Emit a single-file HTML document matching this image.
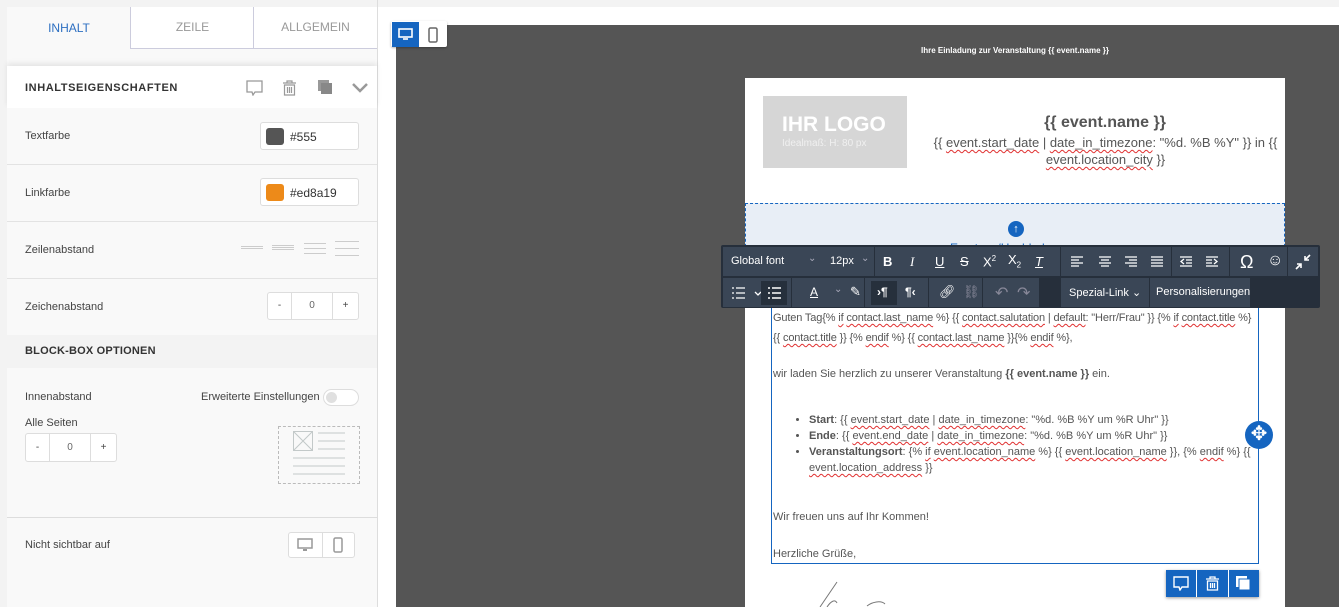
<!DOCTYPE html>
<html><head><meta charset="utf-8"><style>
*{box-sizing:border-box;margin:0;padding:0}
body{width:1339px;height:607px;overflow:hidden;background:#fff;font-family:"Liberation Sans",sans-serif;position:relative;color:#333}
.a{position:absolute}
.lbl{font-size:11px;color:#444}
.row{position:absolute;left:7px;width:370px;border-bottom:1px solid #e3e3e3;background:#f9f9f9}
.sp{text-decoration:underline wavy #e03030;text-decoration-thickness:1px;text-underline-offset:2px}
.tb{position:absolute;background:#3a4656;height:29px;top:1px}
.ti{position:absolute;color:#fff;font-size:13px;text-align:center}
.et{font-size:11px;color:#555;line-height:16px}
</style></head><body>
<div class="a" style="left:0;top:0;width:1339px;height:7px;background:#f3f3f3"></div>
<div class="a" style="left:0;top:0;width:378px;height:607px;background:#f3f3f3;border-right:1px solid #ddd"></div>
<div class="a" style="left:7px;top:7px;width:370px;height:600px;background:#f9f9f9"></div>
<div class="a" style="left:7px;top:7px;width:124px;height:42px;color:#2d6fc1;font-size:12px;text-align:center;line-height:42px">INHALT</div>
<div class="a" style="left:130px;top:7px;width:124px;height:42px;background:#fff;border-left:1px solid #ccd;border-bottom:1px solid #ccd;color:#999;font-size:12px;text-align:center;line-height:40px">ZEILE</div>
<div class="a" style="left:253px;top:7px;width:124px;height:42px;background:#fff;border-left:1px solid #ccd;border-bottom:1px solid #ccd;color:#999;font-size:12px;text-align:center;line-height:40px">ALLGEMEIN</div>
<div class="a" style="left:7px;top:66px;width:370px;height:42px;background:#fff;box-shadow:0 -3px 5px rgba(0,0,0,.08)"></div>
<div class="a" style="left:25px;top:82px;font-size:11px;font-weight:bold;letter-spacing:.6px;color:#333">INHALTSEIGENSCHAFTEN</div>
<svg class="a" style="left:246px;top:80px" width="17" height="16"><path d="M1 1h15v11H9l-2 3-1-3H1z" fill="none" stroke="#999" stroke-width="1.3"/></svg>
<svg class="a" style="left:282px;top:80px" width="15" height="16"><path d="M1 3h13M5 3V1h5v2M2.5 5h10v10h-10zM5.5 7v6M7.5 7v6M9.5 7v6" fill="none" stroke="#999" stroke-width="1.2"/></svg>
<svg class="a" style="left:318px;top:80px" width="15" height="15"><rect x="0" y="0" width="11" height="11" fill="#999"/><rect x="3" y="3" width="11" height="11" fill="#888"/></svg>
<svg class="a" style="left:352px;top:83px" width="16" height="10"><path d="M1 1l7 7 7-7" fill="none" stroke="#999" stroke-width="2.5"/></svg>

<div class="row" style="top:108px;height:57px"><span class="a lbl" style="left:18px;top:22px">Textfarbe</span>
<div class="a" style="left:253px;top:14px;width:99px;height:28px;background:#fff;border:1px solid #ddd;border-radius:3px"><div class="a" style="left:5px;top:5px;width:18px;height:17px;background:#555;border-radius:3px"></div><span class="a" style="left:29px;top:7px;font-size:12px;color:#333">#555</span></div></div>
<div class="row" style="top:165px;height:57px"><span class="a lbl" style="left:18px;top:22px">Linkfarbe</span>
<div class="a" style="left:253px;top:13px;width:99px;height:28px;background:#fff;border:1px solid #ddd;border-radius:3px"><div class="a" style="left:5px;top:5px;width:18px;height:17px;background:#ed8a19;border-radius:3px"></div><span class="a" style="left:29px;top:7px;font-size:12px;color:#333">#ed8a19</span></div></div>
<div class="row" style="top:222px;height:57px"><span class="a lbl" style="left:18px;top:22px">Zeilenabstand</span>
<svg class="a" style="left:234px;top:19px" width="120" height="20" stroke="#ccc"><path d="M0 5.5h22M0 7.5h22M31 4.5h22M31 6.5h22M31 8.5h22M63 2.5h22M63 7.5h22M63 12.5h22M94 0.5h24M94 7.5h24M94 14.5h24"/></svg></div>
<div class="row" style="top:279px;height:56px;border-bottom:none"><span class="a lbl" style="left:18px;top:22px">Zeichenabstand</span>
<div class="a" style="left:260px;top:13px;width:92px;height:28px;background:#fff;border:1px solid #ddd;border-radius:3px;font-size:10px;color:#444"><span class="a" style="left:0;width:24px;text-align:center;border-right:1px solid #ddd;height:26px;top:0;line-height:26px">-</span><span class="a" style="left:24px;width:40px;text-align:center;line-height:26px;color:#666">0</span><span class="a" style="left:64px;width:26px;text-align:center;line-height:26px;border-left:1px solid #ddd">+</span></div></div>
<div class="a" style="left:7px;top:335px;width:370px;height:33px;background:#f3f3f3"></div>
<div class="a" style="left:25px;top:345px;font-size:11px;font-weight:bold;color:#333;letter-spacing:.2px">BLOCK-BOX OPTIONEN</div>
<span class="a lbl" style="left:25px;top:391px">Innenabstand</span>
<span class="a lbl" style="left:201px;top:391px">Erweiterte Einstellungen</span>
<div class="a" style="left:323px;top:389px;width:36px;height:17px;border:1px solid #ddd;border-radius:9px;background:#fff"><div class="a" style="left:2px;top:2px;width:11px;height:11px;border-radius:50%;background:#e0e0e0"></div></div>
<span class="a lbl" style="left:25px;top:417px">Alle Seiten</span>
<div class="a" style="left:25px;top:433px;width:92px;height:29px;background:#fff;border:1px solid #ddd;border-radius:3px;font-size:10px;color:#444"><span class="a" style="left:0;width:24px;text-align:center;border-right:1px solid #ddd;height:27px;line-height:27px">-</span><span class="a" style="left:24px;width:40px;text-align:center;line-height:27px;color:#666">0</span><span class="a" style="left:64px;width:26px;text-align:center;line-height:27px;border-left:1px solid #ddd">+</span></div>
<div class="a" style="left:278px;top:426px;width:82px;height:58px;border:1px dashed #bbb"></div>
<svg class="a" style="left:292px;top:430px" width="54" height="50" stroke="#c3c9c9" fill="none"><rect x="1.5" y="1.5" width="19" height="19"/><path d="M1.5 1.5l19 19M20.5 1.5l-19 19M26 3h27M26 11h27M26 19h27M1 28h52M1 36h52M1 44h52"/></svg>
<div class="a" style="left:7px;top:517px;width:370px;height:1px;background:#ddd"></div>
<span class="a lbl" style="left:25px;top:539px">Nicht sichtbar auf</span>
<div class="a" style="left:288px;top:532px;width:67px;height:26px;background:#fff;border:1px solid #ddd;border-radius:3px"><div class="a" style="left:33px;top:0;width:1px;height:24px;background:#ddd"></div></div>
<svg class="a" style="left:297px;top:538px" width="16" height="14"><rect x="1" y="1" width="14" height="9" fill="none" stroke="#999" stroke-width="1.5"/><path d="M6 12h4" stroke="#999" stroke-width="2"/></svg>
<svg class="a" style="left:333px;top:537px" width="10" height="16"><rect x="1" y="1" width="8" height="14" rx="1.5" fill="none" stroke="#999" stroke-width="1.5"/></svg>

<div class="a" style="left:396px;top:25px;width:943px;height:582px;background:#555"></div>
<div class="a" style="left:391px;top:21px;width:56px;height:26px;background:#fff;border-radius:2px;box-shadow:0 1px 2px rgba(0,0,0,.3)"></div>
<div class="a" style="left:392px;top:22px;width:27px;height:25px;background:#1565c0"></div>
<svg class="a" style="left:398px;top:28px" width="15" height="13"><rect x="1" y="1" width="13" height="8" fill="none" stroke="#fff" stroke-width="1.6"/><path d="M5 11h5" stroke="#fff" stroke-width="1.6"/></svg>
<svg class="a" style="left:428px;top:27px" width="10" height="16"><rect x="1" y="1" width="8" height="14" rx="1.5" fill="#fff" stroke="#666" stroke-width="1.5"/></svg>
<div class="a" style="left:745px;top:46px;width:540px;text-align:center;font-size:8px;color:#fff;font-weight:bold">Ihre Einladung zur Veranstaltung {{ event.name }}</div>

<div class="a" style="left:745px;top:78px;width:540px;height:529px;background:#fff"></div>
<div class="a" style="left:763px;top:96px;width:144px;height:72px;background:#d6d6d6"></div>
<div class="a" style="left:782px;top:113px;font-size:21px;font-weight:bold;color:#fff">IHR LOGO</div>
<div class="a" style="left:782px;top:138px;font-size:10px;color:#f0f0f0">Idealmaß: H: 80 px</div>
<div class="a" style="left:925px;top:114px;width:360px;text-align:center;font-size:16px;font-weight:bold;color:#555">{{ event.name }}</div>
<div class="a" style="left:933px;top:134px;width:345px;text-align:center;font-size:13px;color:#555;line-height:17px">{{ <span class="sp">event.start_date</span> | <span class="sp">date_in_timezone</span>: "%d. %B %Y" }} in {{ <span class="sp">event.location_city</span> }}</div>
<div class="a" style="left:745px;top:203px;width:540px;height:100px;background:#e8eef6;border-top:1px dashed #1565c0;border-left:1px dashed #1565c0;border-right:1px dashed #1565c0"></div>
<div class="a" style="left:1008px;top:221px;width:16px;height:16px;border-radius:50%;background:#1565c0;color:#fff;font-size:11px;font-weight:bold;text-align:center;line-height:16px">↑</div>
<div class="a" style="left:950px;top:241px;font-size:12px;color:#1565c0">Ersetzen/Hochladen</div>

<div class="a" style="left:771px;top:300px;width:488px;height:264px;border:1px solid #1565c0;border-top:none;background:#fff"></div>
<div class="a et" style="left:773px;top:308px;width:486px;line-height:20px;white-space:nowrap;overflow:hidden;letter-spacing:-0.15px">Guten Tag{% <span class="sp">if</span> <span class="sp">contact.last_name</span> %} {{ <span class="sp">contact.salutation</span> | <span class="sp">default</span>: "Herr/Frau" }} {% <span class="sp">if</span> <span class="sp">contact.title</span> %}<br>{{ <span class="sp">contact.title</span> }} {% <span class="sp">endif</span> %} {{ <span class="sp">contact.last_name</span> }}{% <span class="sp">endif</span> %},</div>
<div class="a et" style="left:773px;top:366px">wir laden Sie herzlich zu unserer Veranstaltung <b>{{ event.name }}</b> ein.</div>
<ul class="a et" style="left:809px;top:412px;width:470px;list-style:disc;white-space:nowrap">
<li><b>Start</b>: {{ <span class="sp">event.start_date</span> | <span class="sp">date_in_timezone</span>: "%d. %B %Y um %R Uhr" }}</li>
<li><b>Ende</b>: {{ <span class="sp">event.end_date</span> | <span class="sp">date_in_timezone</span>: "%d. %B %Y um %R Uhr" }}</li>
<li><b>Veranstaltungsort</b>: {% <span class="sp">if</span> <span class="sp">event.location_name</span> %} {{ <span class="sp">event.location_name</span> }}, {% <span class="sp">endif</span> %} {{<br><span class="sp">event.location_address</span> }}</li></ul>
<div class="a et" style="left:773px;top:509px">Wir freuen uns auf Ihr Kommen!</div>
<div class="a et" style="left:773px;top:546px">Herzliche Grüße,</div>
<div class="a" style="left:1245px;top:421px;width:28px;height:28px;border-radius:50%;background:#1565c0;color:#fff;font-size:20px;text-align:center;line-height:27px">✥</div>
<div class="a" style="left:1166px;top:570px;width:93px;height:27px;background:#1565c0;box-shadow:0 1px 3px rgba(0,0,0,.4)"><div class="a" style="left:30px;top:0;width:1px;height:27px;background:#fff"></div><div class="a" style="left:62px;top:0;width:1px;height:27px;background:#fff"></div></div>
<svg class="a" style="left:1173px;top:576px" width="16" height="15"><path d="M1 1h14v10H9l-2 3-1-3H1z" fill="none" stroke="#fff" stroke-width="1.4"/></svg>
<svg class="a" style="left:1205px;top:576px" width="15" height="15"><path d="M1 3h13M5 3V1h5v2M2.5 5h10v9h-10zM5.5 7v5M7.5 7v5M9.5 7v5" fill="none" stroke="#fff" stroke-width="1.3"/></svg>
<svg class="a" style="left:1236px;top:576px" width="15" height="15"><rect x="0" y="0" width="11" height="11" fill="#fff"/><rect x="3" y="3" width="11" height="11" fill="#fff" stroke="#1565c0"/></svg>
<svg class="a" style="left:805px;top:580px" width="100" height="27"><path d="M15 27l17-25M22 27c4-6 8-8 10-4M62 26c5-4 14-6 18-2" fill="none" stroke="#777" stroke-width="1"/></svg>

<div class="a" style="left:721px;top:245px;width:599px;height:63px;background:#262f3b;border-radius:2px"></div>
<div class="a" style="left:722px;top:246px;width:597px;height:61px">
<div class="tb" style="left:1px;width:151px"><span class="a" style="left:8px;top:8px;color:#fff;font-size:11px">Global font</span><span class="a" style="left:85px;top:6px;color:#aab;font-size:10px">⌄</span><span class="a" style="left:107px;top:8px;color:#fff;font-size:11px">12px</span><span class="a" style="left:138px;top:6px;color:#aab;font-size:10px">⌄</span></div>
<div class="tb" style="left:153px;width:185px"><span class="ti" style="left:8px;top:7px;font-weight:bold">B</span><span class="ti" style="left:35px;top:7px;font-style:italic;font-family:'Liberation Serif'">I</span><span class="ti" style="left:60px;top:7px;text-decoration:underline">U</span><span class="ti" style="left:85px;top:7px;text-decoration:line-through">S</span><span class="ti" style="left:108px;top:7px">X<sup style="font-size:8px">2</sup></span><span class="ti" style="left:133px;top:5px">X<sub style="font-size:8px">2</sub></span><span class="ti" style="left:160px;top:7px;font-style:italic;text-decoration:underline">T</span></div>
<div class="tb" style="left:339px;width:110px"><svg class="a" style="left:10px;top:9px" width="95" height="12" stroke="#fff" stroke-width="1.3"><path d="M0 1h12M0 4h8M0 7h12M0 10h8M28 1h12M30 4h8M28 7h12M30 10h8M54 1h12M58 4h8M54 7h12M58 10h8M80 1h12M80 4h12M80 7h12M80 10h12"/></svg></div>
<div class="tb" style="left:450px;width:57px"><svg class="a" style="left:8px;top:9px" width="44" height="12" stroke="#fff" stroke-width="1.3" fill="none"><path d="M0 1h12M6 4h6M6 7h6M0 10h12M4 3l-3 2.5 3 2.5M26 1h12M26 4h6M26 7h6M26 10h12M34 3l3 2.5-3 2.5"/></svg></div>
<div class="tb" style="left:508px;width:57px"><span class="ti" style="left:10px;top:5px;font-size:18px">Ω</span><span class="ti" style="left:37px;top:5px;font-size:16px">☺</span></div>
<div class="tb" style="left:566px;width:30px"><svg class="a" style="left:7px;top:7px" width="16" height="16" stroke="#fff" stroke-width="1.6" fill="none"><path d="M15 1L10 6M10 2v4h4M1 15l5-5M2 10h4v4"/></svg></div>
<div class="tb" style="left:1px;top:32px;width:68px"><svg class="a" style="left:8px;top:8px" width="60" height="14" stroke="#fff" stroke-width="1.3" fill="none"><path d="M5 2h9M5 7h9M5 12h9M1 2h2M1 7h2M1 12h2M24 6l3 3 3-3"/></svg><div class="a" style="left:38px;top:3px;width:26px;height:24px;background:#26303c"></div><svg class="a" style="left:44px;top:8px" width="24" height="14" stroke="#fff" stroke-width="1.4" fill="none"><path d="M5 2h9M5 7h9M5 12h9M1 2h2M1 7h2M1 12h2"/></svg><span class="a" style="left:68px;top:6px;color:#aab;font-size:10px">⌄</span></div>
<div class="tb" style="left:70px;top:32px;width:72px"><span class="ti" style="left:18px;top:7px;font-size:12px;text-decoration:underline">A</span><span class="a" style="left:42px;top:6px;color:#aab;font-size:10px">⌄</span><span class="ti" style="left:58px;top:6px">✎</span></div>
<div class="tb" style="left:143px;top:32px;width:63px"><div class="a" style="left:6px;top:3px;width:26px;height:24px;background:#26303c"></div><span class="ti" style="left:12px;top:7px;font-size:12px;font-weight:bold">›¶</span><span class="ti" style="left:40px;top:7px;font-size:12px;font-weight:bold">¶‹</span></div>
<div class="tb" style="left:207px;top:32px;width:53px"><span class="ti" style="left:10px;top:6px">🔗︎</span><span class="ti" style="left:34px;top:6px;color:#889">⛓︎</span></div>
<div class="tb" style="left:261px;top:32px;width:56px"><span class="ti" style="left:12px;top:5px;color:#889;font-size:16px">↶</span><span class="ti" style="left:34px;top:5px;color:#889;font-size:16px">↷</span></div>
<div class="tb" style="left:339px;top:32px;width:88px"><span class="a" style="left:8px;top:8px;color:#fff;font-size:11px">Spezial-Link ⌄</span></div>
<div class="tb" style="left:428px;top:32px;width:100px"><span class="a" style="left:6px;top:8px;color:#fff;font-size:11px">Personalisierungen</span></div>
</div>
</body></html>
